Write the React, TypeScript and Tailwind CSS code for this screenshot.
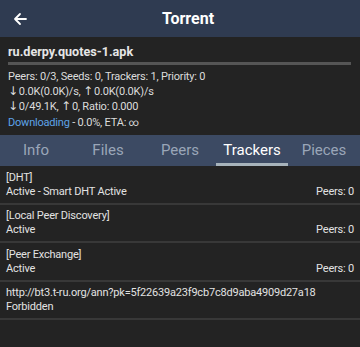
import React from "react";

const font = { fontFamily: "Roboto, 'Liberation Sans', sans-serif" };

function Row({ title, left, right }: { title: string; left: string; right?: string }) {
  return (
    <div className="flex h-[38.5px] flex-col justify-center border-b-2 border-[#383838] px-[6px] pt-[1px] text-[11px] leading-[14px] tracking-[-0.2px] text-[#e2e2e2]">
      <div>{title}</div>
      <div className="flex justify-between">
        <span>{left}</span>
        {right && <span>{right}</span>}
      </div>
    </div>
  );
}

function A({ c }: { c: string }) {
  return <span className="mr-[1px] font-['DejaVu_Sans'] text-[12px]">{c}</span>;
}

export default function App() {
  const tabs = ["Info", "Files", "Peers", "Trackers", "Pieces"];
  return (
    <div className="h-[347px] w-[360px] overflow-hidden bg-[#232323]" style={font}>
      <div className="relative flex h-[37px] items-center justify-center bg-[#2f3b51]">
        <svg className="absolute left-[13px] top-[12px]" width="14" height="14" viewBox="0 0 14 14" fill="none">
          <path d="M13 7H2M7 2L2 7l5 5" stroke="#ffffff" strokeWidth="1.8" strokeLinecap="round" strokeLinejoin="round" />
        </svg>
        <span className="ml-[16px] text-[16px] font-bold text-white">Torrent</span>
      </div>
      <div className="px-[8px] pt-[7px]">
        <div className="text-[12.6px] font-bold leading-[16px] text-[#e6e6e6]">ru.derpy.quotes-1.apk</div>
        <div className="mt-[2px] h-[3px] w-[343px] bg-[#555555]" />
        <div className="mt-[4px] text-[11px] leading-[15px] tracking-[-0.2px] text-[#dcdcdc]">
          <div>Peers: 0/3, Seeds: 0, Trackers: 1, Priority: 0</div>
          <div>
            <A c="↓" />0.0K(0.0K)/s, <A c="↑" />0.0K(0.0K)/s
          </div>
          <div>
            <A c="↓" />0/49.1K, <A c="↑" />0, Ratio: 0.000
          </div>
          <div className="mt-[1px]">
            <span className="text-[#5ea3e8]">Downloading</span> - 0.0%, ETA: <span className="text-[10px]">∞</span>
          </div>
        </div>
      </div>
      <div className="mt-[5px] flex h-[31px] bg-[#3c4a63]">
        {tabs.map((t) => (
          <div key={t} className="relative flex w-[72px] items-center justify-center">
            <span className={`text-[15px] ${t === "Trackers" ? "text-white" : "text-[#9aa6b8]"}`}>{t}</span>
            {t === "Trackers" && <div className="absolute bottom-0 left-0 h-[3px] w-[72px] bg-[#a7b3bb]" />}
          </div>
        ))}
      </div>
      <div>
        <Row title="[DHT]" left="Active - Smart DHT Active" right="Peers: 0" />
        <Row title="[Local Peer Discovery]" left="Active" right="Peers: 0" />
        <Row title="[Peer Exchange]" left="Active" right="Peers: 0" />
        <Row title="http://bt3.t-ru.org/ann?pk=5f22639a23f9cb7c8d9aba4909d27a18" left="Forbidden" />
      </div>
    </div>
  );
}
